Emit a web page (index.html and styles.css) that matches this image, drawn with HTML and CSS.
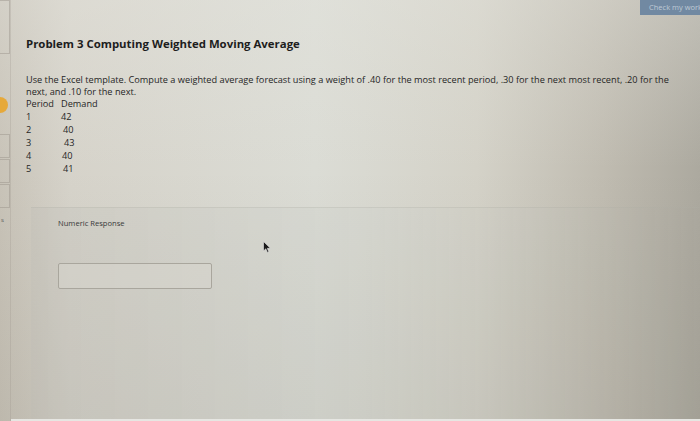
FILE: index.html
```html
<!DOCTYPE html>
<html>
<head>
<meta charset="utf-8">
<link rel="stylesheet" href="styles.css">
</head>
<body>
<div class="page">
  <aside class="rail">
    <div class="rail-box top"></div>
    <div class="rail-dot"></div>
    <div class="rail-box"></div>
    <div class="rail-box"></div>
    <div class="rail-box"></div>
    <div class="rail-label">s</div>
  </aside>
  <main class="content">
    <div class="topbar">
      <div class="check-btn">Check my work</div>
    </div>
    <section class="problem">
      <h1 class="title">Problem 3 Computing Weighted Moving Average</h1>
      <p class="text">Use the Excel template. Compute a weighted average forecast using a weight of .40 for the most recent period, .30 for the next most recent, .20 for the next, and .10 for the next.</p>
      <div class="data">
        <div class="row head"><span class="c1">Period</span><span class="c2">Demand</span></div>
        <div class="row"><span class="c1">1</span><span class="c2 n0">42</span></div>
        <div class="row"><span class="c1">2</span><span class="c2 n2">40</span></div>
        <div class="row"><span class="c1">3</span><span class="c2 n3">43</span></div>
        <div class="row"><span class="c1">4</span><span class="c2 n1">40</span></div>
        <div class="row"><span class="c1">5</span><span class="c2 n2">41</span></div>
      </div>
    </section>
    <section class="response">
      <div class="resp-label">Numeric Response</div>
      <div class="resp-input"></div>
      <svg class="cursor" width="8" height="12" viewBox="0 0 8 12"><path d="M0.5 0.5 L0.5 10 L2.8 7.8 L4.4 11.4 L5.8 10.8 L4.3 7.3 L7.4 7.3 Z" fill="#1a1a1a" stroke="#e8e8e8" stroke-width="0.6"/></svg>
    </section>
    <div class="bottom"></div>
  </main>
</div>
</body>
</html>
```
FILE: styles.css
```css
html, body {
  margin: 0;
  padding: 0;
}
body {
  width: 700px;
  height: 421px;
  overflow: hidden;
  font-family: "Open Sans", Lato, "Liberation Sans", sans-serif;
  color: #262626;
}
.page {
  display: flex;
  width: 700px;
  height: 421px;
  background:
    linear-gradient(to bottom, rgba(232,232,226,0.35) 0%, rgba(0,0,0,0) 40%, rgba(60,55,40,0.08) 100%),
    linear-gradient(to right, #c8c3b8 0%, #d6d3ca 10%, #dbdcd5 45%, #d4d2c8 68%, #c0bcb1 86%, #aca99f 100%);
}
.rail {
  width: 10px;
  flex: none;
  display: flex;
  flex-direction: column;
  border-right: 1px solid rgba(150,145,135,0.25);
}
.rail-box {
  height: 22px;
  border: 1px solid rgba(150,145,135,0.45);
  border-left: none;
  margin-top: 1px;
}
.rail-box.top {
  height: 52px;
  margin-top: 0;
  margin-bottom: 43px;
}
.rail-dot {
  width: 8px;
  height: 16px;
  border-radius: 0 8px 8px 0;
  background: #e6a93a;
  margin-bottom: 20px;
}
.rail-label {
  font-size: 6px;
  color: #555;
  margin-top: 8px;
  padding-left: 1px;
}
.content {
  flex: 1;
  display: flex;
  flex-direction: column;
}
.topbar {
  height: 15px;
  display: flex;
  justify-content: flex-end;
}
.check-btn {
  width: 60px;
  height: 15px;
  background: #7189a2;
  color: #bfcad6;
  font-size: 7.5px;
  line-height: 14px;
  padding-left: 9px;
  white-space: nowrap;
  overflow: hidden;
  box-sizing: border-box;
}
.problem {
  padding: 22px 0 0 15px;
}
.title {
  margin: 0;
  font-size: 11.4px;
  line-height: 14px;
  font-weight: 700;
  color: #1d1d1d;
}
.text {
  margin: 23px 0 0 0;
  font-size: 9.2px;
  line-height: 12px;
  width: 660px;
}
.data {
  font-size: 9.2px;
}
.row {
  display: flex;
  height: 13px;
  line-height: 13px;
}
.row.head {
  height: 12px;
  line-height: 12px;
}
.c1 {
  width: 35px;
}
.n0 { padding-left: 0; }
.n1 { padding-left: 1px; }
.n2 { padding-left: 2px; }
.n3 { padding-left: 3px; }
.response {
  position: relative;
  margin: 32px 0 0 20px;
  flex: 1;
  padding: 10px 0 0 27px;
  background: linear-gradient(to right, rgba(185,185,180,0.22), rgba(200,205,200,0.18) 50%, rgba(160,160,150,0.08));
  border-top: 1px solid rgba(175,175,165,0.3);
}
.resp-label {
  font-size: 7.6px;
  color: #3a3a3a;
  line-height: 10px;
}
.resp-input {
  width: 154px;
  height: 26px;
  box-sizing: border-box;
  margin-top: 35px;
  border: 1px solid #a9a69d;
  border-radius: 2px;
  background: rgba(215,213,205,0.5);
}
.cursor {
  position: absolute;
  left: 232px;
  top: 33px;
}
.bottom {
  height: 2px;
  background: #e6e6e2;
}
```
